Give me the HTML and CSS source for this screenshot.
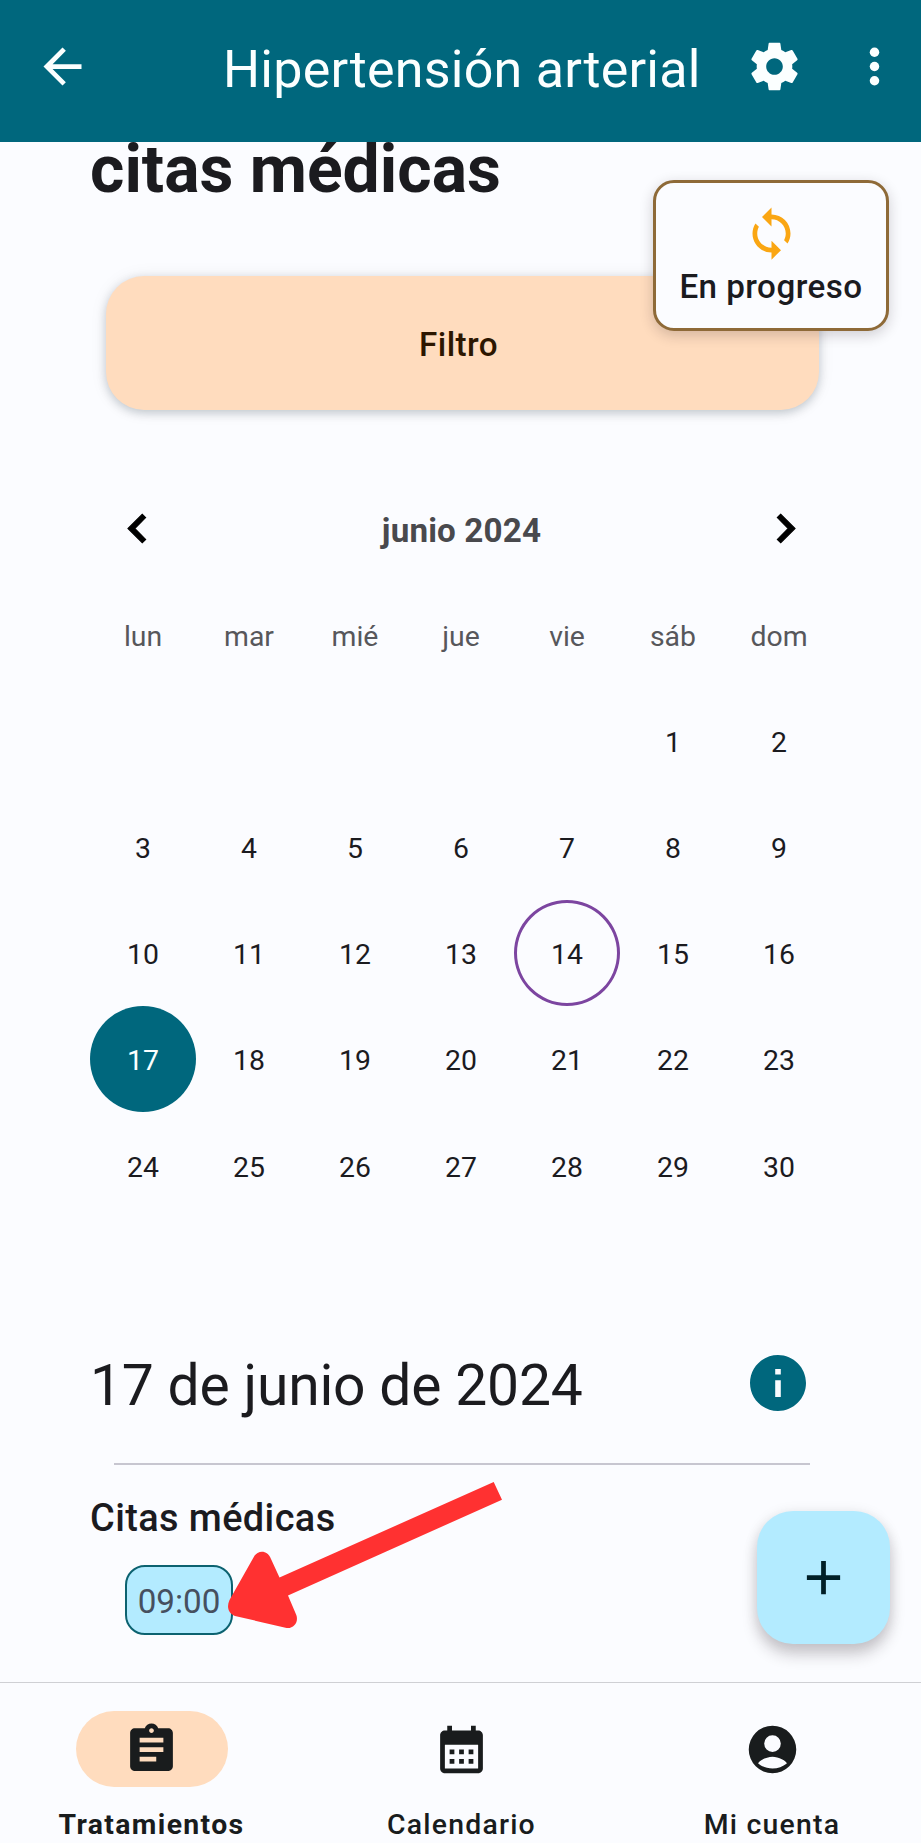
FILE: index.html
```
<!DOCTYPE html>
<html lang="es">
<head>
<meta charset="utf-8">
<title>Hipertensión arterial</title>
<link rel="stylesheet" href="styles.css">
</head>
<body>
<div class="app">
  <header class="topbar">
    <svg class="icon" viewBox="0 0 24 24"><path d="M20 11H7.83l5.59-5.59L12 4l-8 8 8 8 1.41-1.41L7.83 13H20v-2z"/></svg>
    <h1 class="topbar-title">Hipertensión arterial</h1>
    <svg class="icon icon-settings" viewBox="0 0 24 24"><path d="M19.43 12.98c.04-.32.07-.64.07-.98s-.03-.66-.07-.98l2.11-1.65c.19-.15.24-.42.12-.64l-2-3.46c-.12-.22-.39-.3-.61-.22l-2.49 1c-.52-.4-1.08-.73-1.69-.98l-.38-2.65C14.46 2.18 14.25 2 14 2h-4c-.25 0-.46.18-.49.42l-.38 2.65c-.61.25-1.17.59-1.69.98l-2.49-1c-.23-.09-.49 0-.61.22l-2 3.46c-.13.22-.07.49.12.64l2.11 1.65c-.04.32-.07.65-.07.98s.03.66.07.98l-2.11 1.65c-.19.15-.24.42-.12.64l2 3.46c.12.22.39.3.61.22l2.49-1c.52.4 1.08.73 1.69.98l.38 2.65c.03.24.24.42.49.42h4c.25 0 .46-.18.49-.42l.38-2.65c.61-.25 1.17-.59 1.69-.98l2.49 1c.23.09.49 0 .61-.22l2-3.46c.12-.22.07-.49-.12-.64l-2.11-1.65zM12 15.5c-1.93 0-3.5-1.57-3.5-3.5s1.57-3.5 3.5-3.5 3.5 1.57 3.5 3.5-1.57 3.5-3.5 3.5z"/></svg>
    <svg class="icon" viewBox="0 0 24 24"><circle cx="12" cy="6" r="2"/><circle cx="12" cy="12" r="2"/><circle cx="12" cy="18" r="2"/></svg>
  </header>

  <main class="content">
    <h2 class="section-title">citas médicas</h2>
    <button class="filter" type="button">Filtro</button>

    <div class="month">
      <svg class="icon chevron" viewBox="0 0 24 24"><path d="M15.41 7.41L14 6l-6 6 6 6 1.41-1.41L10.83 12z"/></svg>
      <span class="month-name">junio 2024</span>
      <svg class="icon chevron" viewBox="0 0 24 24"><path d="M10 6L8.59 7.41 13.17 12l-4.58 4.59L10 18l6-6z"/></svg>
    </div>

    <div class="days">
      <span class="weekday">lun</span><span class="weekday">mar</span><span class="weekday">mié</span><span class="weekday">jue</span><span class="weekday">vie</span><span class="weekday">sáb</span><span class="weekday">dom</span>
      <span class="day first">1</span><span class="day">2</span>
      <span class="day">3</span><span class="day">4</span><span class="day">5</span><span class="day">6</span><span class="day">7</span><span class="day">8</span><span class="day">9</span>
      <span class="day">10</span><span class="day">11</span><span class="day">12</span><span class="day">13</span><span class="day today">14</span><span class="day">15</span><span class="day">16</span>
      <span class="day selected">17</span><span class="day">18</span><span class="day">19</span><span class="day">20</span><span class="day">21</span><span class="day">22</span><span class="day">23</span>
      <span class="day">24</span><span class="day">25</span><span class="day">26</span><span class="day">27</span><span class="day">28</span><span class="day">29</span><span class="day">30</span>
    </div>

    <div class="date-row">
      <h3 class="date">17 de junio de 2024</h3>
      <svg class="info" viewBox="2 2 20 20"><path d="M12 2C6.48 2 2 6.48 2 12s4.48 10 10 10 10-4.48 10-10S17.52 2 12 2zm1 15h-2v-6h2v6zm0-8h-2V7h2v2z"/></svg>
    </div>
    <hr class="divider">
    <h4 class="subtitle">Citas médicas</h4>
    <span class="chip">09:00</span>

    <div class="status">
      <svg class="icon icon-sync" viewBox="0 0 24 24"><path d="M12 4V1L8 5l4 4V6c3.31 0 6 2.69 6 6 0 1.01-.25 1.97-.7 2.8l1.46 1.46C19.54 15.03 20 13.57 20 12c0-4.42-3.58-8-8-8zm0 14c-3.31 0-6-2.69-6-6 0-1.01.25-1.97.7-2.8L5.24 7.74C4.46 8.97 4 10.43 4 12c0 4.42 3.58 8 8 8v3l4-4-4-4v3z"/></svg>
      <span class="status-text">En progreso</span>
    </div>
    <svg class="pointer" viewBox="0 0 280 152"><path d="M265.700 4L51.500 99.500L43 81C39.500 71.500 29.500 71.500 25.500 79.500L1.500 122C-1.500 128.500 0 135.500 7 138L57.500 149.700C65 151.500 71 144.500 68.300 137L60 117.500L274 21.700Z"/></svg>
    <button class="fab" type="button" aria-label="Añadir"><svg class="icon" viewBox="0 0 24 24"><path d="M19 13h-6v6h-2v-6H5v-2h6V5h2v6h6v2z"/></svg></button>
  </main>

  <nav class="bottom">
    <a class="tab active">
      <span class="pill"><svg class="icon" viewBox="0 0 24 24"><path d="M19 3h-4.180C14.400 1.840 13.300 1 12 1c-1.300 0-2.400.84-2.820 2H5c-1.100 0-2 .9-2 2v14c0 1.100.9 2 2 2h14c1.100 0 2-.9 2-2V5c0-1.100-.9-2-2-2zm-7 0c.55 0 1 .45 1 1s-.45 1-1 1-1-.45-1-1 .45-1 1-1zm2 14H7v-2h7v2zm3-4H7v-2h10v2zm0-4H7V7h10v2z"/></svg></span>
      <span class="tab-label">Tratamientos</span>
    </a>
    <a class="tab">
      <span class="pill"><svg class="icon" viewBox="0 0 24 24"><path d="M19 4h-1V2h-2v2H8V2H6v2H5c-1.100 0-2 .9-2 2v14c0 1.100.9 2 2 2h14c1.100 0 2-.9 2-2V6c0-1.100-.9-2-2-2zm0 16H5V10h14v10zM7 12h2v2H7zM11 12h2v2h-2zM15 12h2v2h-2zM7 16h2v2H7zM11 16h2v2h-2zM15 16h2v2h-2z" fill-rule="evenodd"/></svg></span>
      <span class="tab-label">Calendario</span>
    </a>
    <a class="tab account">
      <span class="pill"><svg class="icon" viewBox="0 0 24 24"><path fill-rule="evenodd" d="M12 2a10 10 0 1 0 0 20a10 10 0 1 0 0-20zM12 6a3.500 3.500 0 1 1 0 7a3.500 3.500 0 1 1 0-7zM12 20c-2.280 0-4.380-.79-6.030-2.100C5.970 16.800 9.500 15 12 15s6.030 1.800 6.030 2.900C16.380 19.210 14.280 20 12 20z"/></svg></span>
      <span class="tab-label">Mi cuenta</span>
    </a>
  </nav>
</div>
</body>
</html>
```
FILE: styles.css
```
* { box-sizing: border-box; }

body {
  margin: 0;
  background: #fbfcff;
  color: #1b1b1f;
  font-family: Roboto, "Noto Sans", sans-serif;
}

h1, h2, h3, h4 { margin: 0; }
button { border: 0; padding: 0; font: inherit; }

.app {
  width: 921px;
  height: 1843px;
  display: flex;
  flex-direction: column;
  overflow: hidden;
}

.icon { width: 57px; height: 57px; fill: currentColor; display: block; flex: none; }

.topbar {
  position: relative;
  z-index: 1;
  flex: none;
  display: flex;
  align-items: center;
  height: 142px;
  padding: 0 18px 9px 34px;
  background: #00677d;
  color: #fbffff;
}
.topbar-title {
  flex: 1;
  padding: 6px 0 0 132px;
  font-size: 52px;
  font-weight: 400;
  line-height: 66px;
  letter-spacing: .25px;
  white-space: nowrap;
}
.icon-settings { margin-right: 43px; }

.content {
  position: relative;
  flex: none;
  height: 1540px;
  padding: 0 88px 0 90px;
}

.section-title {
  height: 67px;
  font-size: 66px;
  font-weight: 700;
  line-height: 56px;
}
.filter {
  display: block;
  width: 713px;
  height: 134px;
  margin: 67px 0 0 16px;
  padding: 3px 8px 0 0;
  border-radius: 38px;
  background: #ffdcbe;
  color: #2c1600;
  font-size: 33.2px;
  font-weight: 500;
  letter-spacing: .4px;
  box-shadow: 0 3px 10px rgba(0, 30, 40, .2), 0 1px 18px rgba(0, 30, 40, .07);
}
.month {
  display: flex;
  align-items: center;
  justify-content: space-between;
  height: 58px;
  margin-top: 89px;
  padding: 0 19px;
  color: #000;
}
.chevron { stroke: currentColor; stroke-width: .5; }
.month-name {
  color: #49494d;
  font-size: 33.2px;
  font-weight: 700;
  letter-spacing: .15px;
  padding-top: 4px;
}
.days {
  display: grid;
  grid-template-columns: repeat(7, 106px);
  grid-auto-rows: 106.1px;
  margin-top: 25px;
  font-size: 28.4px;
}
.weekday, .day {
  display: flex;
  align-items: center;
  justify-content: center;
  border-radius: 50%;
  padding-top: 3px;
}
.weekday { color: #57575b; }
.first { grid-column: 6; }
.today { border: 3px solid #7c45a0; }
.selected { background: #00677d; color: #fbffff; }

.date-row {
  display: flex;
  align-items: center;
  justify-content: space-between;
  height: 68px;
  margin-top: 130px;
  padding-right: 27px;
}
.date {
  font-size: 57px;
  font-weight: 400;
  letter-spacing: -.2px;
  padding-top: 6px;
  white-space: nowrap;
}
.info { width: 56px; height: 56px; fill: #00677d; }
.divider {
  height: 2px;
  margin: 46px 23px 0 24px;
  border: 0;
  background: #c7c6d0;
}
.subtitle {
  margin-top: 30px;
  font-size: 37.9px;
  font-weight: 500;
  line-height: 46px;
  letter-spacing: .4px;
}
.chip {
  display: flex;
  align-items: center;
  justify-content: center;
  width: 108px;
  height: 70px;
  margin: 24px 0 0 35px;
  padding-top: 4px;
  border: 2px solid #0c6270;
  border-radius: 20px;
  background: #b3ebff;
  color: #46505f;
  font-size: 33.2px;
}

.status {
  position: absolute;
  left: 653px;
  top: 38px;
  width: 236px;
  height: 151px;
  display: flex;
  flex-direction: column;
  align-items: center;
  padding-top: 22px;
  border: 3px solid #8e6a38;
  border-radius: 21px;
  background: #fbfcff;
  box-shadow: 0 4px 14px rgba(30, 20, 30, .2);
}
.icon-sync { color: #faa613; }
.status-text {
  margin-top: 5px;
  font-size: 33.2px;
  font-weight: 500;
  line-height: 40px;
  letter-spacing: .45px;
  white-space: nowrap;
}
.pointer {
  position: absolute;
  left: 228px;
  top: 1336px;
  width: 280px;
  height: 152px;
  fill: #ff3131;
}
.fab {
  position: absolute;
  left: 757px;
  top: 1369px;
  width: 133px;
  height: 133px;
  display: flex;
  align-items: center;
  justify-content: center;
  border-radius: 36px;
  background: #b3ebff;
  color: #001f27;
  box-shadow: 0 11px 15px rgba(30, 20, 30, .2), 0 2px 14px rgba(30, 20, 30, .1);
}

.bottom {
  flex: 1;
  display: grid;
  grid-template-columns: 303px 317px 301px;
  border-top: 1px solid #cfd0d4;
  color: #191c1d;
}
.tab {
  display: flex;
  flex-direction: column;
  align-items: center;
  padding-top: 28px;
}
.account { padding-left: 3px; }
.pill {
  display: flex;
  align-items: center;
  justify-content: center;
  width: 152px;
  height: 76px;
  border-radius: 38px;
}
.active .pill { background: #ffdcbe; }
.active .tab-label { font-weight: 700; letter-spacing: 1.35px; }
.tab-label {
  margin-top: 20px;
  font-size: 28.4px;
  font-weight: 500;
  line-height: 36px;
  letter-spacing: 1.2px;
  white-space: nowrap;
}
```
